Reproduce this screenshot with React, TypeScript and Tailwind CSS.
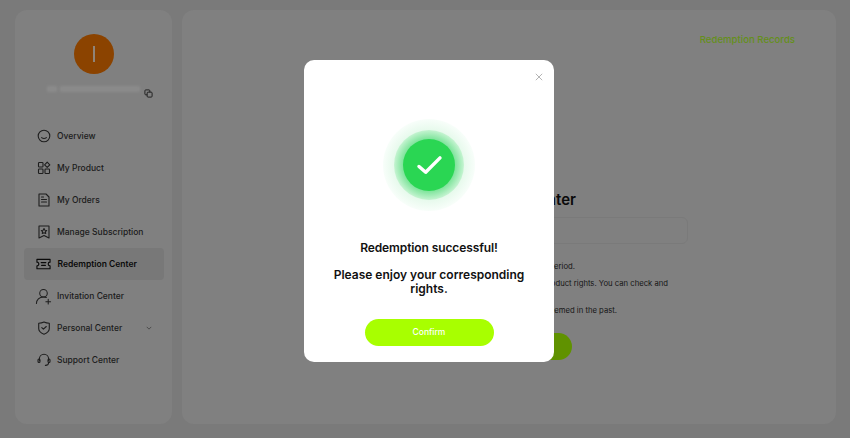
import React from "react";

const S = ({ children }: { children: React.ReactNode }) => (
  <svg viewBox="0 0 16 16" fill="none" stroke="currentColor" strokeWidth="1.1" strokeLinecap="round" strokeLinejoin="round" className="w-[16px] h-[16px] shrink-0">
    {children}
  </svg>
);

const items: { label: string; icon: React.ReactNode; active?: boolean; chevron?: boolean }[] = [
  { label: "Overview", icon: <S><circle cx="8" cy="8" r="5.8" /><path d="M5.6 9.6c1.3 1 3.5 1 4.8 0" /></S> },
  { label: "My Product", icon: <S><rect x="2.5" y="2.5" width="4.5" height="4.5" rx=".8" /><path d="M11.2 2.2l2.6 2.6-2.6 2.6-2.6-2.6z" /><rect x="2.5" y="9" width="4.5" height="4.5" rx=".8" /><rect x="9" y="9" width="4.5" height="4.5" rx=".8" /></S> },
  { label: "My Orders", icon: <S><path d="M3 2h7l3 3v9H3z" /><path d="M5.5 7.5h5M5.5 10h5M5.5 5h2" /></S> },
  { label: "Manage Subscription", icon: <S><path d="M3 2h10v12l-5-2.4L3 14z" /><path d="M8 4.6l.9 1.7 1.8.2-1.3 1.2.3 1.8L8 8.7l-1.7.8.3-1.8-1.3-1.2 1.8-.2z" /></S> },
  { label: "Redemption Center", active: true, icon: <svg viewBox="0 0 16 12" fill="none" stroke="currentColor" strokeWidth="1.2" strokeLinecap="round" strokeLinejoin="round" className="w-[15px] h-[12px] shrink-0"><path d="M1 1h14v3a2 2 0 0 0 0 4v3H1V8a2 2 0 0 0 0-4z" /><path d="M5.5 4.5h5M6 7.5h4" /></svg> },
  { label: "Invitation Center", icon: <svg viewBox="0 0 18 18" fill="none" stroke="currentColor" strokeWidth="1.1" strokeLinecap="round" className="w-[17px] h-[17px] shrink-0 -ml-[1px]"><circle cx="9" cy="5.5" r="4" /><path d="M1.5 16.5c0-4 3-7 7.5-7 1.2 0 2.2.2 3 .6M11.5 14.5h5M14 12v5" /></svg> },
  { label: "Personal Center", chevron: true, icon: <S><path d="M2.7 3.2c2 0 3.7-.4 5.3-1.2 1.6.8 3.3 1.2 5.3 1.2v5.3c0 2.8-2.4 4.6-5.3 5.7-2.9-1.1-5.3-2.9-5.3-5.7z" /><path d="M5.8 7.6l1.6 1.5 2.9-2.6" /></S> },
  { label: "Support Center", icon: <S><path d="M3.4 8.5V6.8a4.6 4.6 0 0 1 9.2 0v1.7" /><rect x="2" y="7" width="2" height="3.4" rx="1" /><rect x="12" y="7" width="2" height="3.4" rx="1" /><path d="M12.6 10.6c0 1.7-1.4 2.8-3.2 2.8" /></S> },
];

const font = { fontFamily: "Inter, 'Liberation Sans', sans-serif" };

export default function App() {
  return (
    <div className="relative w-[850px] h-[438px] overflow-hidden bg-[#cbcbcb] flex gap-[10px] pl-[15px] pr-[14px] pt-[10px] pb-[14px]" style={font}>
      <aside className="w-[157px] rounded-[12px] bg-[#d5d5d5] pl-[9px] pr-[8px] pt-[24px] flex flex-col">
        <div className="w-[40px] h-[40px] rounded-full bg-[#e87000] self-center flex items-center justify-center">
          <div className="w-[2px] h-[16px] bg-[#f0dcc8]" />
        </div>
        <div className="h-[20px] mt-[8px] flex items-center pl-[23px] gap-[4px]">
          <div className="w-[93px] h-[6px] mb-[6px] flex gap-[3px] blur-[1.5px]">
            <div className="w-[10px] bg-[#e8e8e8]" />
            <div className="flex-1 bg-[#e8e8e8]" />
          </div>
          <svg viewBox="0 0 10 10" fill="none" stroke="#2a2a2a" strokeWidth="1" className="w-[9px] h-[9px] mt-[2px]">
            <rect x="1" y="1" width="5.5" height="5.5" rx="1" />
            <rect x="3.5" y="3.5" width="5.5" height="5.5" rx="1" fill="#d5d5d5" />
          </svg>
        </div>
        <nav className="mt-[18px] flex flex-col">
          {items.map((it) => (
            <div key={it.label} className={`h-[32px] flex items-center rounded-[4px] pl-[12px] ${it.active ? "bg-[#c8c8c8] text-[#111111] font-semibold" : "text-[#333333] font-medium"}`}>
              <span className="w-[21px] flex items-center">{it.icon}</span>
              <span className={`text-[8.5px] whitespace-nowrap ${it.active ? "ml-[0.5px]" : ""}`}>{it.label}</span>
              {it.chevron && (
                <svg viewBox="0 0 8 5" fill="none" stroke="#444444" strokeWidth=".8" className="w-[6px] h-[4px] ml-auto mr-[12px]">
                  <path d="M1 1l3 3 3-3" />
                </svg>
              )}
            </div>
          ))}
        </nav>
      </aside>

      <main className="flex-1 rounded-[12px] bg-[#d5d5d5] flex flex-col items-center">
        <div className="self-end mt-[23px] mr-[41px] text-[9.6px] font-medium text-[#a8ee30] whitespace-nowrap">Redemption Records</div>
        <h1 className="mt-[142px] mr-[6px] text-[15px] font-semibold text-[#111111] whitespace-nowrap">Redemption Center</h1>
        <div className="mt-[5px] w-[358px] h-[27px] rounded-[6px] border border-[#cccccc]" />
        <div className="mt-[17px] w-[358px] text-[7.7px] text-[#2a2a2a] flex flex-col">
          <p className="w-[245px] text-right whitespace-nowrap h-[12px] overflow-hidden">period.</p>
          <p className="mt-[5px] w-[338px] text-right whitespace-nowrap h-[12px] overflow-hidden">product rights. You can check and</p>
          <p className="mt-[15px] w-[287px] text-right whitespace-nowrap h-[12px] overflow-hidden">eemed in the past.</p>
        </div>
        <div className="mt-[16px] w-[126px] h-[27px] rounded-full bg-[#a0f400]" />
      </main>

      <div className="absolute inset-0 bg-[rgba(0,0,0,0.4)] backdrop-blur-[0.5px]" />

      <div className="absolute left-[304px] top-[60px] w-[250px] h-[302px] rounded-[10px] bg-white flex flex-col items-center">
        <svg viewBox="0 0 10 10" fill="none" stroke="#8a8a8a" strokeWidth=".8" className="absolute right-[11px] top-[13px] w-[8px] h-[8px]">
          <path d="M1 1l8 8M9 1l-8 8" />
        </svg>
        <div className="mt-[59px] w-[92px] h-[92px] rounded-full bg-[radial-gradient(closest-side,#e4f9ea_72%,#f8fefa_100%)] flex items-center justify-center">
          <div className="w-[70px] h-[70px] rounded-full bg-[radial-gradient(closest-side,#7ee49b_74%,#c6f4d2_100%)] flex items-center justify-center">
            <div className="w-[52px] h-[52px] rounded-full bg-[#2ad653] flex items-center justify-center">
              <svg viewBox="0 0 28 22" fill="none" stroke="#ffffff" strokeWidth="3.6" strokeLinecap="round" strokeLinejoin="round" className="w-[27px] h-[21px]">
                <path d="M3 12l7 6L25 3" />
              </svg>
            </div>
          </div>
        </div>
        <p className="mt-[29px] text-[12px] tracking-[-0.1px] leading-[16px] font-semibold text-[#111111] whitespace-nowrap">Redemption successful!</p>
        <p className="mt-[12px] w-[200px] text-center text-[12px] leading-[14px] font-semibold text-[#111111]">Please enjoy your corresponding rights.</p>
        <button className="mt-[23px] w-[129px] h-[27px] rounded-full bg-[#a8ff00] text-white text-[8.5px] font-medium">Confirm</button>
      </div>
    </div>
  );
}
